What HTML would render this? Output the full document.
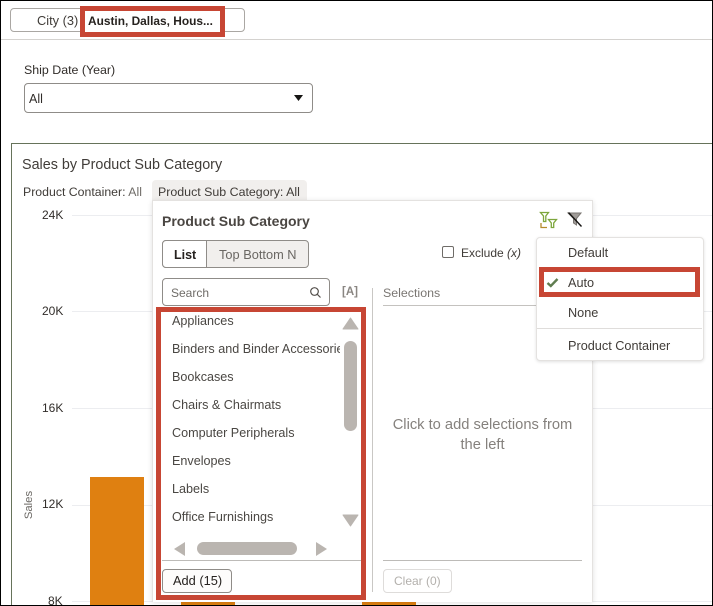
<!DOCTYPE html>
<html><head><meta charset="utf-8"><style>
html,body{margin:0;padding:0;background:#fff}
#p{position:relative;width:713px;height:606px;overflow:hidden;background:#fff;font-family:"Liberation Sans",sans-serif;font-size:12px;color:#312d2a}
#p div{position:absolute;box-sizing:border-box;white-space:nowrap}
.t{line-height:16px}
.li{left:172px;color:#4a4743;font-size:12.6px;line-height:16px}
.bar{background:#df8011}
.grid{background:#ecedf0;height:1px}
.red{border:5px solid #c74634}
.y{color:#312d2a;font-size:12px;line-height:14px}
.m{font-size:12.700px;color:#403c38}
</style></head><body><div id="p">
<div style="left:10px;top:8px;width:235px;height:24px;border:1px solid #aaa7a3;border-radius:4px"></div>
<div class="t" style="left:37px;top:13px;color:#403c38;font-size:12.800px">City (3)</div>
<div style="left:0;top:39px;width:713px;height:1px;background:#d4d2cf"></div>
<div class="red" style="left:80px;top:6px;width:145px;height:31px;background:#fff"></div>
<div class="t" style="left:88px;top:13px;font-weight:bold;font-size:11.900px;color:#26221f">Austin, Dallas, Hous...</div>
<div class="t" style="left:24px;top:62px;color:#312d2a;font-size:12.400px">Ship Date (Year)</div>
<div style="left:24px;top:83px;width:289px;height:30px;border:1px solid #8f8c88;border-radius:4px"></div>
<div class="t" style="left:29px;top:91px;font-size:12.500px">All</div>
<svg style="position:absolute;left:293px;top:94px" width="11" height="8"><path d="M1 1H10L5.500 7Z" fill="#161513"/></svg>

<div style="left:11px;top:143px;width:702px;height:463px;border:1px solid #66735a;border-bottom:0;border-right:0"></div>
<div class="t" style="left:22px;top:157px;font-size:14.350px;color:#403c38">Sales by Product Sub Category</div>
<div class="t" style="left:23px;top:184px;color:#403c38;font-size:12.300px">Product Container: <span style="color:#6f6c68">All</span></div>
<div style="left:152px;top:180px;width:155px;height:24px;background:#f1efed;border-radius:4px 4px 0 0"></div>
<div class="t" style="left:158px;top:184px;color:#403c38;font-size:12.400px">Product Sub Category: All</div>

<div class="y" style="left:42px;top:208px">24K</div>
<div class="y" style="left:42px;top:304px">20K</div>
<div class="y" style="left:42px;top:401px">16K</div>
<div class="y" style="left:42px;top:497px">12K</div>
<div class="y" style="left:48px;top:594px">8K</div>
<div class="grid" style="left:72px;top:215px;width:641px"></div>
<div class="grid" style="left:72px;top:311px;width:641px"></div>
<div class="grid" style="left:72px;top:408px;width:641px"></div>
<div class="grid" style="left:72px;top:505px;width:641px"></div>
<div class="grid" style="left:72px;top:601px;width:641px"></div>
<div style="left:22px;top:498px;width:14px;height:14px"><div style="left:-10px;top:0;width:34px;text-align:center;font-size:11.300px;line-height:14px;color:#6b6864;transform:rotate(-90deg)">Sales</div></div>
<div class="bar" style="left:90px;top:477px;width:54px;height:128px"></div>
<div class="bar" style="left:181px;top:602px;width:54px;height:3px"></div>
<div class="bar" style="left:362px;top:602px;width:54px;height:3px"></div>

<div style="left:152px;top:200px;width:441px;height:402px;background:#fff;border:1px solid #e4e2e0;border-bottom:0;box-shadow:0 1px 5px rgba(0,0,0,.12)"></div>
<div class="t" style="left:162px;top:213px;font-size:14px;font-weight:bold;color:#4a4642">Product Sub Category</div>

<svg style="position:absolute;left:538px;top:210px" width="22" height="20" fill="none" stroke-width="1.300"><path d="M2.500 2.500H10.500L7.800 6V11.500H5.500V6Z" stroke="#7da63c"/><path d="M10.500 9.500H18.500L15.700 13V17.500H13.300V13Z" stroke="#7da63c"/><path d="M3 13V17.500H9" stroke="#b58a2c"/></svg>
<svg style="position:absolute;left:566px;top:210px" width="17" height="18"><path d="M2 3H15L10.500 8.500V15L7.500 13V8.500Z" fill="#a09c98" stroke="#7a7672"/><path d="M2.500 2.500L15.500 16.500" stroke="#161513" stroke-width="1.400"/></svg>

<div style="left:162px;top:240px;width:147px;height:28px;border:1px solid #8f8c88;border-radius:4px;background:#f1efed"></div>
<div style="left:162px;top:240px;width:45px;height:28px;border:1px solid #8f8c88;border-radius:4px 0 0 4px;background:#fff"></div>
<div class="t" style="left:174px;top:247px;font-weight:bold;color:#26221f;font-size:12.500px">List</div>
<div class="t" style="left:219px;top:247px;color:#6a6763;font-size:12.800px">Top Bottom N</div>

<div style="left:442px;top:246px;width:12px;height:12px;border:1px solid #6f6c68;border-radius:2px"></div>
<div class="t" style="left:461px;top:245px;color:#403c38">Exclude <i>(x)</i></div>

<div style="left:162px;top:278px;width:168px;height:28px;border:1px solid #8f8c88;border-radius:4px"></div>
<div class="t" style="left:171px;top:285px;color:#6f6c68">Search</div>
<svg style="position:absolute;left:309px;top:286px" width="13" height="13" fill="none" stroke="#54504c" stroke-width="1.200"><circle cx="5.500" cy="5.500" r="3.800"/><path d="M8.300 8.300L11.500 11.500"/></svg>
<div class="t" style="left:342px;top:284px;font-size:11.500px;font-weight:bold;color:#8a8682">[A]</div>
<div style="left:372px;top:288px;width:1px;height:304px;background:#c9c7c4"></div>
<div class="t" style="left:383px;top:285px;color:#7a7672;font-size:12.400px">Selections</div>
<div style="left:383px;top:305px;width:155px;height:1px;background:#c4c2bf"></div>

<div class="li" style="top:313px">Appliances</div>
<div class="li" style="top:341px;width:168px;overflow:hidden">Binders and Binder Accessorie</div>
<div class="li" style="top:369px">Bookcases</div>
<div class="li" style="top:397px">Chairs &amp; Chairmats</div>
<div class="li" style="top:425px">Computer Peripherals</div>
<div class="li" style="top:453px">Envelopes</div>
<div class="li" style="top:481px">Labels</div>
<div class="li" style="top:509px">Office Furnishings</div>

<svg style="position:absolute;left:342px;top:317px" width="17" height="13"><path d="M8.500 1L16 12H1Z" fill="#bab5b0" stroke="#bab5b0" stroke-linejoin="round"/></svg>
<svg style="position:absolute;left:342px;top:514px" width="17" height="13"><path d="M8.500 12L16 1H1Z" fill="#bab5b0" stroke="#bab5b0" stroke-linejoin="round"/></svg>
<div style="left:344px;top:341px;width:13px;height:90px;background:#bab5b0;border-radius:7px"></div>
<svg style="position:absolute;left:173px;top:541px" width="13" height="16"><path d="M1 8L12 1V15Z" fill="#bab5b0"/></svg>
<svg style="position:absolute;left:315px;top:541px" width="13" height="16"><path d="M12 8L1 1V15Z" fill="#bab5b0"/></svg>
<div style="left:197px;top:542px;width:100px;height:13px;background:#bab5b0;border-radius:7px"></div>

<div style="left:162px;top:560px;width:199px;height:1px;background:#bdbbb8"></div>
<div style="left:383px;top:560px;width:199px;height:1px;background:#bdbbb8"></div>
<div style="left:162px;top:569px;width:70px;height:24px;border:1px solid #8f8c88;border-radius:4px;background:#fdfcfb"></div>
<div class="t" style="left:173px;top:573px;color:#26221f;font-size:12.800px">Add (15)</div>
<div style="left:383px;top:569px;width:69px;height:24px;border:1px solid #dedcda;border-radius:4px"></div>
<div class="t" style="left:394px;top:573px;color:#b3b0ac">Clear (0)</div>

<div style="left:372px;top:415px;width:221px;text-align:center;font-size:14.700px;line-height:20px;color:#85817d;white-space:normal">Click to add selections from<br>the left</div>

<div class="red" style="left:156px;top:307px;width:210px;height:293px"></div>

<div style="left:536px;top:237px;width:168px;height:124px;background:#fff;border:1px solid #e4e2e0;border-radius:4px;box-shadow:0 1px 3px rgba(0,0,0,.12)"></div>
<div class="t m" style="left:568px;top:245px">Default</div>
<div class="red" style="left:539px;top:267px;width:161px;height:30px"></div>
<svg style="position:absolute;left:546px;top:277px" width="13" height="11" fill="none"><path d="M1.500 6L4.800 9L11.500 2" stroke="#5f7d4f" stroke-width="2.400"/></svg>
<div class="t m" style="left:568px;top:275px">Auto</div>
<div class="t m" style="left:568px;top:305px">None</div>
<div style="left:537px;top:328px;width:165px;height:1px;background:#dfdddb"></div>
<div class="t m" style="left:568px;top:338px">Product Container</div>

<div style="left:0;top:0;width:713px;height:606px;border:1px solid #000"></div>
</div></body></html>
